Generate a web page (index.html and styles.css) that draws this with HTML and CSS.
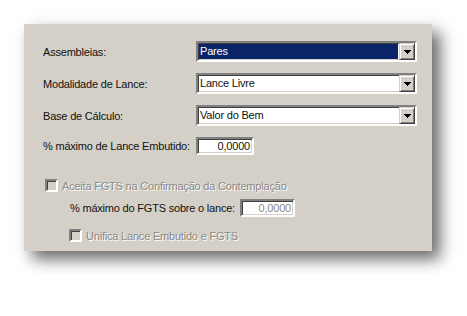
FILE: index.html
```html
<!DOCTYPE html>
<html lang="pt-BR">
<head>
<meta charset="UTF-8">
<title>Parâmetros de Lance</title>
<link rel="stylesheet" href="styles.css">
</head>
<body>
    <div class="panel">
        <!-- combos -->
        <div class="row">
            <span class="label">Assembleias:</span>
            <div class="combo">
                <div class="combo-value"><span class="selected">Pares</span></div>
                <div class="combo-btn"><svg width="7" height="4" viewBox="0 0 7 4"><polygon points="0,0 7,0 3.5,4" fill="#000"/></svg></div>
            </div>
        </div>
        <div class="row">
            <span class="label">Modalidade de Lance:</span>
            <div class="combo">
                <div class="combo-value"><span>Lance Livre</span></div>
                <div class="combo-btn"><svg width="7" height="4" viewBox="0 0 7 4"><polygon points="0,0 7,0 3.5,4" fill="#000"/></svg></div>
            </div>
        </div>
        <div class="row">
            <span class="label">Base de Cálculo:</span>
            <div class="combo">
                <div class="combo-value"><span>Valor do Bem</span></div>
                <div class="combo-btn"><svg width="7" height="4" viewBox="0 0 7 4"><polygon points="0,0 7,0 3.5,4" fill="#000"/></svg></div>
            </div>
        </div>
        <div class="row row-edit">
            <span class="label">% máximo de Lance Embutido:</span>
            <div class="edit">0,0000</div>
        </div>

        <!-- opcoes FGTS (desabilitadas) -->
        <div class="check-row">
            <span class="check"></span>
            <span class="disabled">Aceita FGTS na Confirmação da Contemplação</span>
        </div>
        <div class="row row-fgts">
            <span class="label label-fgts">% máximo do FGTS sobre o lance:</span>
            <div class="edit edit-off">0,0000</div>
        </div>
        <div class="check-row check-sub">
            <span class="check"></span>
            <span class="disabled">Unifica Lance Embutido e FGTS</span>
        </div>
    </div>
</body>
</html>
```

FILE: styles.css
```css
body{
    margin:0;
    padding:24px;
    background:#fff;
    font-family:"Liberation Sans", Arial, sans-serif;
    font-size:11px;
    letter-spacing:-0.2px;
    color:#111;
}
.panel{
    width:389px;
    height:210px;
    padding:17px 0 0 19px;
    background:#d4d0c8;
    box-shadow:8px 8px 15px rgba(0,0,0,0.6);
}
.row{
    display:flex;
    align-items:center;
    height:21px;
    margin-bottom:11px;
    white-space:nowrap;
}
.label{
    width:153px;
    flex-shrink:0;
}
.combo{
    width:217px;
    height:17px;
    flex-shrink:0;
    display:flex;
    background:#fff;
    border:2px solid;
    border-color:#808080 #fff #fff #808080;
    box-shadow:inset 1px 1px #404040, inset -1px -1px #d4d0c8;
}
.combo-value{
    flex:1;
    display:flex;
    padding:1px;
}
.combo-value span{
    flex:1;
    line-height:15px;
    padding-left:1px;
}
.combo-value .selected{
    background:#0a246a;
    color:#fff;
}
.combo-btn{
    width:14px;
    height:15px;
    background:#d4d0c8;
    border:1px solid;
    border-color:#d4d0c8 #404040 #404040 #d4d0c8;
    box-shadow:inset 1px 1px #fff, inset -1px -1px #808080;
    display:flex;
    align-items:center;
    justify-content:center;
}
.combo-btn svg{
    display:block;
    shape-rendering:crispEdges;
}
.row-edit{
    height:18px;
    margin-bottom:24px;
}
.edit{
    width:52px;
    height:14px;
    flex-shrink:0;
    line-height:14px;
    background:#fff;
    border:2px solid;
    border-color:#808080 #fff #fff #808080;
    box-shadow:inset 1px 1px #404040, inset -1px -1px #d4d0c8;
    text-align:right;
    padding-right:2px;
}
.edit-off{
    width:49px;
    color:#8a8884;
}
.check-row{
    display:flex;
    align-items:center;
    height:13px;
    padding-left:2px;
    margin-bottom:7px;
    white-space:nowrap;
}
.check{
    width:9px;
    height:9px;
    flex-shrink:0;
    margin-right:4px;
    background:#d4d0c8;
    border:2px solid;
    border-color:#808080 #fff #fff #808080;
    box-shadow:inset 1px 1px #404040, inset -1px -1px #d4d0c8;
}
.disabled{
    color:#8a8884;
    text-shadow:1px 1px #fff;
}
.row-fgts{
    height:18px;
    padding-left:27px;
    margin-bottom:12px;
}
.label-fgts{
    width:170px;
}
.check-sub{
    padding-left:26px;
}
```
